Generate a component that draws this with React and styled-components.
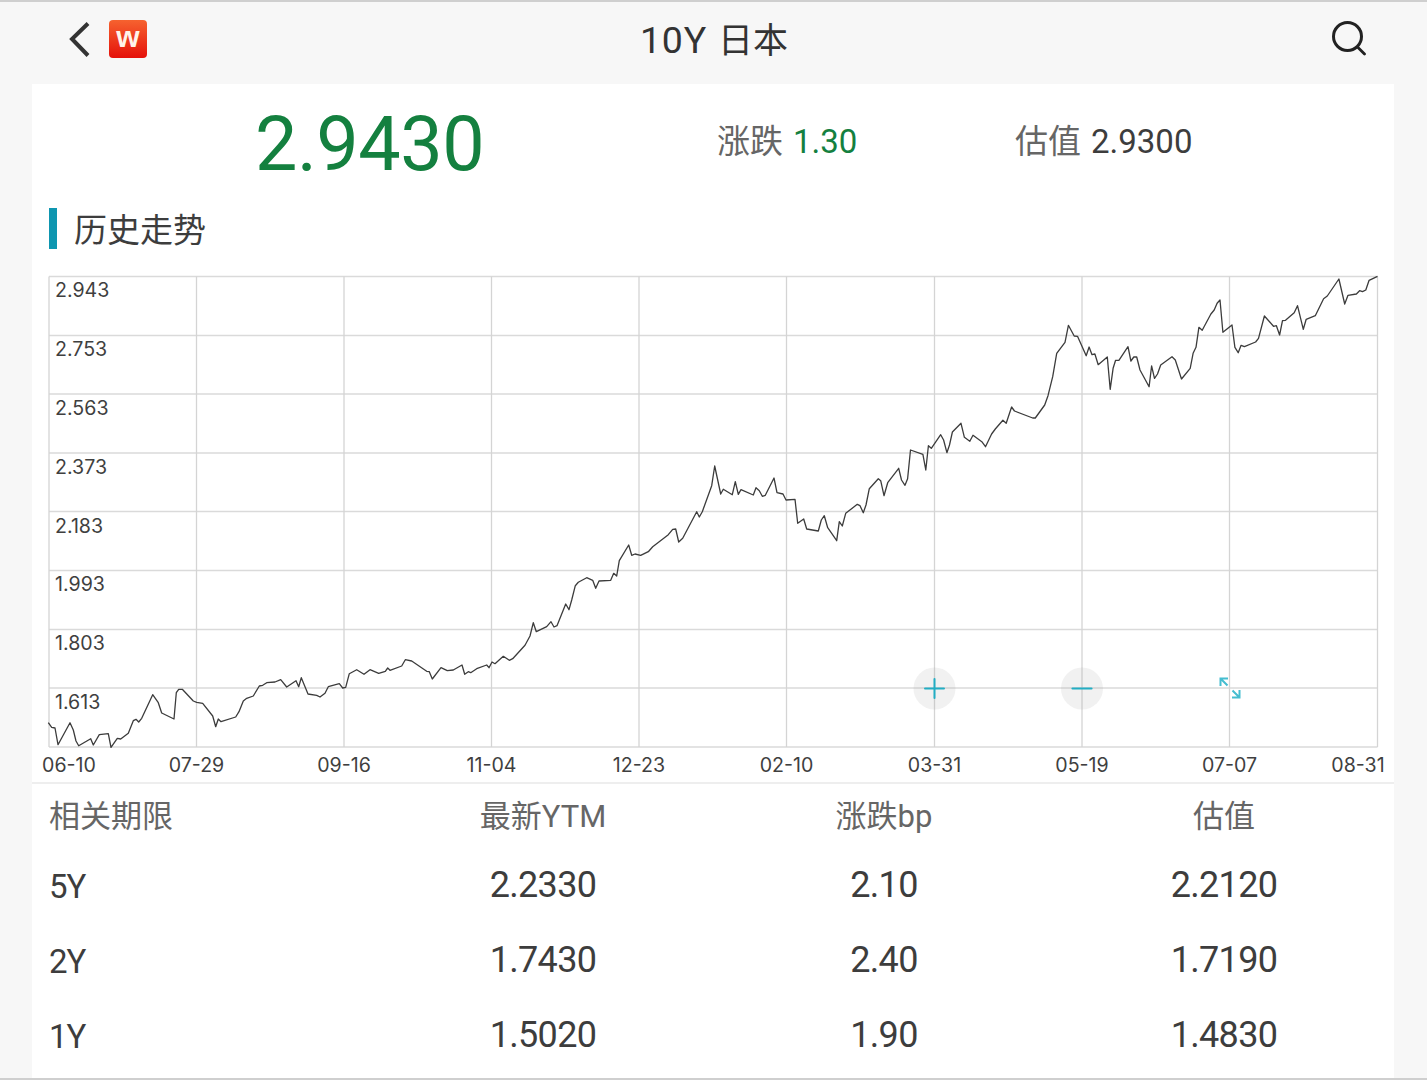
import React from 'react';
import styled, { createGlobalStyle } from 'styled-components';

const FONT = `Roboto, "Noto Sans CJK SC", sans-serif`;

const Global = createGlobalStyle`
  html, body { margin: 0; padding: 0; background: #f7f7f7; }
  body { font-family: ${FONT}; overflow: hidden; }
`;

const Page = styled.div`
  width: 1427px; height: 1080px; box-sizing: border-box;
  background: #f7f7f7; border-top: 2px solid #cfcfcf; border-bottom: 2px solid #cfcfcf;
  display: flex; flex-direction: column; overflow: hidden;
`;
const Header = styled.header`
  height: 82px; box-sizing: border-box; flex: none; display: grid; grid-template-columns: 1fr auto 1fr; align-items: center;
  padding: 0 61px 8px 66px;
`;
const HeaderLeft = styled.div`display: flex; align-items: center; gap: 17px;`;
const HeaderRight = styled.div`display: flex; justify-content: flex-end;`;
const Title = styled.h1`
  margin: -3px 0 0 -4px; font: 400 35px ${FONT}; color: #333; display: flex; align-items: baseline; gap: 11px;
`;
const TitleCode = styled.span`font-size: 37.5px; letter-spacing: 0.7px;`;
const Card = styled.main`
  flex: 1; margin: 0 33px 0 32px; background: #fff; display: flex; flex-direction: column;
`;
const Quote = styled.section`
  height: 116px; flex: none; display: flex; align-items: center;
`;
const Price = styled.div`
  width: 685px; padding: 4px 0 0 223px; box-sizing: border-box;
  font: 400 75.5px ${FONT}; color: #14803f; letter-spacing: -0.5px;
`;
const Stat = styled.div`
  width: ${p => p.$w}px; font: 400 33px ${FONT}; color: #666; display: flex; gap: 10px; align-items: baseline;
  margin-top: -6px;
`;
const StatValue = styled.span`color: ${p => p.$c || '#3d3d3d'};`;
const Section = styled.div`
  height: 41px; box-sizing: border-box; flex: none; margin: 8px 0 0 17px; padding: 0 0 2px 17px; display: flex; align-items: center;
  border-left: 8px solid #0e96b0;
  font: 400 33px ${FONT}; color: #3d3d3d;
`;
const ChartWrap = styled.div`
  margin-top: 11px; flex: none; height: 522px; border-bottom: 2px solid #eeeeee;
`;
const ChartSvg = styled.svg`display: block;`;
const AxisText = styled.text`font: 400 19.6px Inter, sans-serif; fill: #3f3f3f;`;
const Table = styled.section`
  display: grid; grid-template-columns: 340px 342px 340px 340px;
`;
const HeadCell = styled.div`
  height: 64px; box-sizing: border-box; padding: 0 0 6px ${p => (p.$first ? 17 : 0)}px;
  display: flex; align-items: center; justify-content: ${p => (p.$first ? 'flex-start' : 'center')};
  font: 400 31px ${FONT}; color: #666;
`;
const ValueCell = styled.div`
  height: 75px; box-sizing: border-box; padding-bottom: 2px; display: flex; align-items: center; justify-content: center;
  font: 400 36px ${FONT}; color: #3d3d3d; letter-spacing: -0.7px;
`;
const TermCell = styled.div`
  height: 75px; box-sizing: border-box; padding: 2px 0 0 17px; display: flex; align-items: center;
  font: 400 33px ${FONT}; color: #3d3d3d; letter-spacing: -1px;
`;

const pts = `48.3,722.7 51.7,727.3 55,728 58,744.7 70,722.7 73.3,730 76,741 78.7,745.7 90.7,738.7 93.3,745 99.3,734.7 108.3,733.7 111,747.3 117.3,738.3 120.7,739 128.3,733.3 133.3,720.7 136,719.3 138.7,722 141.7,718.3 152.7,694.7 158.3,702.7 161.7,713 174,719 176.3,692.7 178.7,689.3 182.3,689.3 193.3,701 196.7,702.3 202.7,703.3 212.7,716 215.7,726.7 218.3,719 221,721.7 235.7,717 239,711.7 243.3,701 246.7,698.3 253.3,696 259.3,686 262.7,685.3 266.7,682.7 275,682 280.7,679.7 286.7,687 296,680.7 298.7,686.7 301.3,677.7 308,694 316.7,695.3 320,697 325,693.3 328.3,686.7 339.3,683.7 342.7,688 345.7,687.3 349.3,673.7 356.7,669.7 364,674.3 370,669.7 378.7,673.3 385.3,671.3 387.7,668 390,670.3 401.7,666 405.3,659.7 411.7,661 426.7,671.3 429.3,671.7 432.3,679 441,667.7 447.3,670.7 453.3,670 462,665 464.7,674.3 468.3,671.7 470.7,672.7 476.7,668.7 486.7,665 489,667.7 492,662 495,663.7 503.3,656.3 509.3,660.3 512.7,658.7 525,645.3 530,636 533.3,622.7 536.3,631.7 546.7,626.7 551,621.7 554,627 557,625.7 565.7,604 569,609.7 571.7,600 575.3,585.7 578.3,582.3 586.7,577.7 592.7,580.3 595.7,588.3 599,581 610.7,580.3 613.7,573.3 616.7,576 619.3,560.7 628.7,545 631.7,555.3 635,554 640.7,555.3 648.3,551.7 652.7,546.7 668.3,534.7 672.7,529.3 675.7,529 678.7,542 682.7,538.3 696.7,511.7 699.3,517 702.3,511.7 711.7,485.7 714.7,466 720.7,494 723.3,489.3 732.3,494.7 735.3,481.7 738.3,494.3 741,489.7 753.3,495 756,487.7 759.3,490.7 762.3,496.3 765.3,495.3 774,478 777,492.7 783,494 786,500 795,499.3 797.7,523.3 803.7,519 806.7,529 818.3,531 821.3,520 824.3,515.7 827.7,527.7 836.7,540.7 839.3,521.7 842.3,526 845.7,513.3 857.3,504.3 860,505.7 863.3,512.7 866,505 869.3,488.7 878.3,478.7 880.7,480.7 884,495.7 887.7,482.7 898.7,468.3 901.5,480 905,485.3 907.6,478.7 910.5,450 922.9,454.3 925.8,470 928.4,445.7 931.3,448.3 940.7,434.7 943.6,440 946.9,452.7 949.5,445 952.4,432 961,423.3 964.4,437.3 969.8,441.3 973,435.3 981.8,441.7 985.5,446.7 991.6,434 995.3,429 1002.9,420.3 1006.2,423.3 1011.6,407 1014.5,411 1032.7,418 1035.3,418 1044.7,405 1048,395.7 1052.7,376.7 1056.7,353.3 1065,342.3 1068.4,325.3 1074.2,336 1077.5,336.3 1086.2,355.7 1089.1,347 1092,354.7 1094.9,354 1098.2,364.7 1107.3,357 1110.2,389.3 1113.1,368.3 1115.6,360.3 1118.9,360.3 1128,346.7 1130.9,361 1133.8,357 1136.7,357 1140,370 1149.1,386.7 1151.6,366 1154.5,378.3 1157.5,374 1160.7,365 1172,356.7 1175.3,360 1181.5,379 1190.2,368.3 1193.1,353.3 1196,347.3 1198.9,327.3 1202.2,330.3 1210.9,314 1214.2,310 1217.1,303.3 1220,300 1222.9,332.3 1232,325 1234.9,347.3 1238.2,352.7 1241.1,345.3 1244.4,346.7 1255.6,342 1258.5,338.3 1264.4,316 1273.5,326.3 1276.4,325.7 1279.6,335 1282.5,320.7 1285.5,320.3 1294.2,312.7 1297.5,305.7 1303.3,329.3 1306.2,319.3 1315.3,315.7 1323.6,298.7 1327.3,296 1338.9,279 1344.7,304 1348,295.3 1356.4,294 1359.6,290.7 1362.5,291.7 1365.8,290 1369.1,280.3 1377.5,276.3`;

// chart SVG sits at page x=32, y=260 → shift page-coordinates into it
const OX = 32, OY = 260;
const hLines = [276.5, 335.5, 394, 453, 511.5, 570.5, 629.5, 688, 747];
const vLines = [49, 196.5, 344, 491.5, 639, 786.5, 934.5, 1082, 1229.5, 1377.5];
const yLabels = [['2.943', 297], ['2.753', 356], ['2.563', 415], ['2.373', 474], ['2.183', 533], ['1.993', 591], ['1.803', 650], ['1.613', 709]];
const xLabels = [['06-10', 69], ['07-29', 196.5], ['09-16', 344], ['11-04', 491.5], ['12-23', 639], ['02-10', 786.5], ['03-31', 934.5], ['05-19', 1082], ['07-07', 1229.5], ['08-31', 1358]];

function Chart() {
  return (
    <ChartSvg width="1362" height="522" viewBox={`${OX} ${OY} 1362 522`}>
      {hLines.map(y => <line key={y} x1="49" x2="1377.5" y1={y} y2={y} stroke="#dadada" strokeWidth="1.3" />)}
      {vLines.map(x => <line key={x} x1={x} x2={x} y1="276.5" y2="747" stroke="#d4d4d4" strokeWidth="1.3" />)}
      <polyline points={pts} fill="none" stroke="#3c3c3c" strokeWidth="1.3" strokeLinejoin="round" />
      {yLabels.map(([t, y]) => <AxisText key={t} x="55" y={y}>{t}</AxisText>)}
      {xLabels.map(([t, x]) => <AxisText key={t} x={x} y="772" textAnchor="middle">{t}</AxisText>)}
      <circle cx="934.5" cy="688.5" r="21" fill="#9a9a9a" fillOpacity="0.14" />
      <path d="M925 688.5h19M934.5 679v19" stroke="#22aec4" strokeWidth="2" strokeLinecap="round" />
      <circle cx="1082" cy="688.5" r="21" fill="#9a9a9a" fillOpacity="0.14" />
      <path d="M1072.5 688.5h19" stroke="#22aec4" strokeWidth="2.2" strokeLinecap="round" />
      <path d="M1220.5 686V678.5H1228M1220.5 678.5L1227.5 685.5M1232.5 690.5L1239.5 697.5M1239.5 690V697.5H1232" stroke="#45bdd0" strokeWidth="2" fill="none" />
    </ChartSvg>
  );
}

function BackIcon() {
  return (
    <svg width="26" height="40" viewBox="0 0 26 40">
      <path d="M22 4.5L6 20l16 16.5" fill="none" stroke="#333" strokeWidth="4" strokeLinejoin="miter" />
    </svg>
  );
}

const LogoText = styled.text`font: 700 30px "Liberation Sans", sans-serif; fill: #fff3ea;`;

function Logo() {
  return (
    <svg width="38" height="38" viewBox="0 0 38 38">
      <defs>
        <linearGradient id="lg" x1="0" y1="0" x2="0" y2="1">
          <stop offset="0" stopColor="#f6622f" />
          <stop offset="1" stopColor="#e5110a" />
        </linearGradient>
      </defs>
      <rect width="38" height="38" rx="4" fill="url(#lg)" />
      <LogoText x="19" y="27" textAnchor="middle">w</LogoText>
    </svg>
  );
}

function SearchIcon() {
  return (
    <svg width="38" height="38" viewBox="0 0 38 38">
      <circle cx="19.5" cy="16.5" r="14" fill="none" stroke="#222" strokeWidth="3" />
      <path d="M29.5 27l7 7" stroke="#222" strokeWidth="2.8" strokeLinecap="round" />
    </svg>
  );
}

const rows = [
  ['5Y', '2.2330', '2.10', '2.2120'],
  ['2Y', '1.7430', '2.40', '1.7190'],
  ['1Y', '1.5020', '1.90', '1.4830'],
];

export default function App() {
  return (
    <>
      <Global />
      <Page>
        <Header>
          <HeaderLeft><BackIcon /><Logo /></HeaderLeft>
          <Title><TitleCode>10Y</TitleCode>日本</Title>
          <HeaderRight><SearchIcon /></HeaderRight>
        </Header>
        <Card>
          <Quote>
            <Price>2.9430</Price>
            <Stat $w={298}>涨跌 <StatValue $c="#14803f">1.30</StatValue></Stat>
            <Stat $w={300}>估值 <StatValue>2.9300</StatValue></Stat>
          </Quote>
          <Section>历史走势</Section>
          <ChartWrap><Chart /></ChartWrap>
          <Table>
            <HeadCell $first>相关期限</HeadCell>
            <HeadCell>最新YTM</HeadCell>
            <HeadCell>涨跌bp</HeadCell>
            <HeadCell>估值</HeadCell>
            {rows.map(r => (
              <React.Fragment key={r[0]}>
                <TermCell>{r[0]}</TermCell>
                <ValueCell>{r[1]}</ValueCell>
                <ValueCell>{r[2]}</ValueCell>
                <ValueCell>{r[3]}</ValueCell>
              </React.Fragment>
            ))}
          </Table>
        </Card>
      </Page>
    </>
  );
}
